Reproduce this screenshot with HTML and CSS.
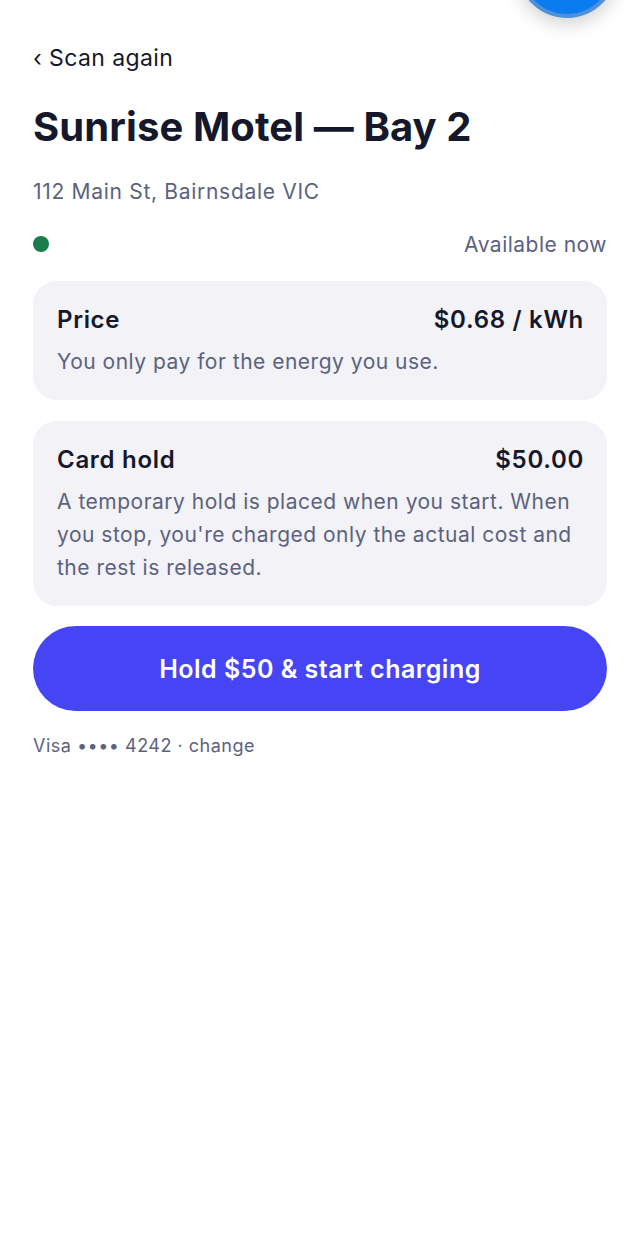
FILE: index.html
```html
<!DOCTYPE html>
<html lang="en">
  <head>
    <meta charset="UTF-8" />
    <title>Sunrise Motel — Bay 2</title>
    <link rel="stylesheet" href="styles.css">
  </head>
  <body>
    <div class="fab"></div>

    <main class="page">
      <a class="back" href="#">‹ Scan again</a>

      <h1 class="title">Sunrise Motel — Bay 2</h1>
      <p class="address">112 Main St, Bairnsdale VIC</p>

      <div class="status">
        <span class="dot"></span>
        <span class="status-text">Available now</span>
      </div>

      <section class="card">
        <div class="card-row">
          <span>Price</span>
          <span>$0.68 / kWh</span>
        </div>
        <p class="card-text">You only pay for the energy you use.</p>
      </section>

      <section class="card">
        <div class="card-row">
          <span>Card hold</span>
          <span>$50.00</span>
        </div>
        <p class="card-text">
          A temporary hold is placed when you start. When you stop, you're
          charged only the actual cost and the rest is released.
        </p>
      </section>

      <button type="button" class="start">Hold $50 &amp; start charging</button>

      <p class="payment">Visa •••• 4242 · change</p>
    </main>
  </body>
</html>
```

FILE: styles.css
```css
body {
  font-family: Inter, "Noto Sans", sans-serif;
  margin: 0;
  background-color: #ffffff;
  color: #15182b;
}
.fab {
  position: absolute;
  top: -82px;
  left: 517px;
  width: 92px;
  height: 92px;
  border-radius: 50%;
  background-color: #0a7cf0;
  border: 4px solid #4f90d8;
  box-shadow: 0 6px 18px rgba(0, 0, 0, 0.18);
}
.page {
  padding: 43px 33px 40px;
}
.back {
  display: block;
  font-size: 23px;
  line-height: 30px;
  letter-spacing: 0.4px;
  color: #15182b;
  text-decoration: none;
}
.title {
  margin: 30px 0 0;
  font-size: 40px;
  line-height: 48px;
  font-weight: 700;
  letter-spacing: 0.1px;
}
.address {
  margin: 27px 0 0;
  font-size: 21px;
  line-height: 28px;
  letter-spacing: 0.7px;
  color: #5b6280;
}
.status {
  display: flex;
  justify-content: space-between;
  align-items: center;
  margin-top: 24px;
  height: 28px;
}
.dot {
  width: 16px;
  height: 16px;
  border-radius: 50%;
  background-color: #1b7d4a;
}
.status-text {
  font-size: 21px;
  letter-spacing: 0.5px;
  color: #5b6280;
}
.card {
  margin-top: 23px;
  padding: 23px 23px 22px 24px;
  background-color: #f2f2f7;
  border-radius: 24px;
}
.card + .card {
  margin-top: 21px;
}
.card-row {
  display: flex;
  justify-content: space-between;
  font-size: 24px;
  line-height: 32px;
  letter-spacing: 0.7px;
  font-weight: 600;
}
.card-text {
  margin: 9px 0 0;
  font-size: 21px;
  line-height: 33px;
  letter-spacing: 0.5px;
  color: #5b6280;
}
.start {
  display: block;
  width: 100%;
  height: 85px;
  margin-top: 20px;
  border: none;
  border-radius: 43px;
  background-color: #4545f5;
  color: white;
  font-family: inherit;
  font-size: 25px;
  letter-spacing: 0.5px;
  font-weight: 600;
  cursor: pointer;
}
.payment {
  margin: 23px 0 0;
  font-size: 18px;
  line-height: 24px;
  letter-spacing: 0.5px;
  color: #5b6280;
}
```
